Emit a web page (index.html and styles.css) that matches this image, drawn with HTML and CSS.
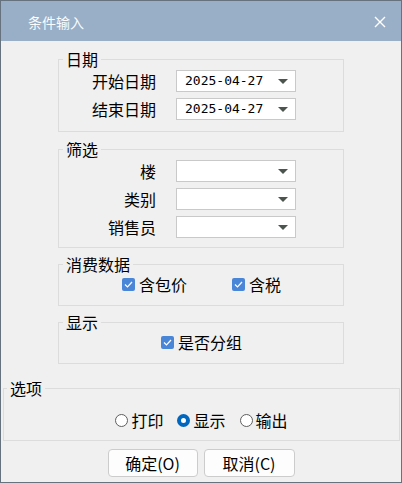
FILE: index.html
```html
<!DOCTYPE html>
<html lang="zh">
<head>
<meta charset="utf-8">
<title>条件输入</title>
<link rel="stylesheet" href="styles.css">
</head>
<body>
<div class="dialog">
  <div class="titlebar">
    <span class="title">条件输入</span>
    <svg class="close" width="12" height="12" viewBox="0 0 12 12"><path d="M1 1 L11 11 M11 1 L1 11" stroke="#ffffff" stroke-width="1.4" fill="none"/></svg>
  </div>
  <div class="content">
    <div class="group g-date">
      <span class="legend">日期</span>
      <div class="form-grid">
        <span class="label">开始日期</span>
        <div class="combo"><span class="value">2025-04-27</span><span class="arrow"></span></div>
        <span class="label">结束日期</span>
        <div class="combo"><span class="value">2025-04-27</span><span class="arrow"></span></div>
      </div>
    </div>
    <div class="group g-filter">
      <span class="legend">筛选</span>
      <div class="form-grid">
        <span class="label">楼</span>
        <div class="combo"><span class="value"></span><span class="arrow"></span></div>
        <span class="label">类别</span>
        <div class="combo"><span class="value"></span><span class="arrow"></span></div>
        <span class="label">销售员</span>
        <div class="combo"><span class="value"></span><span class="arrow"></span></div>
      </div>
    </div>
    <div class="group g-small">
      <span class="legend">消费数据</span>
      <div class="check-row wide">
        <label class="check"><span class="box"><svg width="9" height="7" viewBox="0 0 9 7"><path d="M1 3.5 L3.5 6 L8 1" stroke="#fff" stroke-width="1.2" fill="none"/></svg></span>含包价</label>
        <label class="check"><span class="box"><svg width="9" height="7" viewBox="0 0 9 7"><path d="M1 3.5 L3.5 6 L8 1" stroke="#fff" stroke-width="1.2" fill="none"/></svg></span>含税</label>
      </div>
    </div>
    <div class="group g-small">
      <span class="legend">显示</span>
      <div class="check-row">
        <label class="check"><span class="box"><svg width="9" height="7" viewBox="0 0 9 7"><path d="M1 3.5 L3.5 6 L8 1" stroke="#fff" stroke-width="1.2" fill="none"/></svg></span>是否分组</label>
      </div>
    </div>
    <div class="group g-options">
      <span class="legend">选项</span>
      <div class="radio-row">
        <label class="radio"><span class="circle"></span>打印</label>
        <label class="radio"><span class="circle on"></span>显示</label>
        <label class="radio"><span class="circle"></span>输出</label>
      </div>
    </div>
    <div class="buttons">
      <button class="btn">确定(O)</button>
      <button class="btn btn2">取消(C)</button>
    </div>
  </div>
</div>
</body>
</html>
```
FILE: styles.css
```css
* { box-sizing: border-box; }
html, body { margin: 0; padding: 0; }
body {
  width: 402px;
  height: 483px;
  font-family: "Noto Sans CJK SC", "Noto Sans", sans-serif;
  color: #000;
  background: #f0f0f0;
}
.dialog {
  width: 402px;
  height: 483px;
  border: 1px solid #66727e;
  background: #f0f0f0;
  display: flex;
  flex-direction: column;
}
.titlebar {
  height: 40px;
  background: #98afc7;
  display: flex;
  align-items: center;
  justify-content: space-between;
  padding: 0 15px 0 27px;
}
.title {
  color: #fafcfe;
  font-size: 14px;
  line-height: 16px;
  padding-top: 1px;
}
.close { margin-top: 1px; }
.content {
  display: flex;
  flex-direction: column;
  padding-top: 18px;
}
.group {
  border: 1px solid #dcdcdc;
  margin-left: 57px;
  width: 286px;
}
.legend {
  display: block;
  width: fit-content;
  margin: -10px 0 0 4px;
  padding: 0 3px;
  background: #f0f0f0;
  font-size: 16px;
  line-height: 18px;
}
.g-date { height: 73px; }
.g-filter { height: 99px; margin-top: 17px; }
.g-small { height: 42px; margin-top: 16px; }
.form-grid {
  display: grid;
  grid-template-columns: 97px 120px;
  column-gap: 20px;
  row-gap: 6px;
  margin-top: 2px;
}
.label {
  text-align: right;
  font-size: 16px;
  line-height: 22px;
}
.combo {
  height: 22px;
  background: #fff;
  border: 1px solid #c9c9c9;
  display: flex;
  align-items: center;
  justify-content: space-between;
  padding: 0 7px 0 8px;
}
.value {
  font-family: "DejaVu Sans Mono", monospace;
  font-size: 13px;
  line-height: 20px;
}
.arrow {
  width: 0;
  height: 0;
  border-left: 5px solid transparent;
  border-right: 5px solid transparent;
  border-top: 5px solid #4b554d;
}
.check-row {
  display: flex;
  justify-content: center;
  gap: 45px;
  margin-top: 1px;
  padding-left: 1px;
}
.check {
  display: flex;
  align-items: center;
  gap: 4px;
  font-size: 16px;
  line-height: 20px;
}
.box {
  width: 13px;
  height: 13px;
  border-radius: 2px;
  background: #4a86d8;
  display: flex;
  align-items: center;
  justify-content: center;
}
.g-options {
  margin-left: 2px;
  width: 397px;
  height: 53px;
  margin-top: 24px;
}
.g-options .legend { margin-left: 3px; padding: 0 3px; }
.radio-row {
  display: flex;
  justify-content: center;
  gap: 14px;
  margin-top: 13px;
}
.radio {
  display: flex;
  align-items: center;
  gap: 3px;
  font-size: 16px;
  line-height: 20px;
}
.circle {
  width: 13px;
  height: 13px;
  border-radius: 50%;
  border: 1px solid #5e5e5e;
  background: #fff;
}
.circle.on {
  border: 4px solid #0067c0;
  background: #fff;
}
.buttons {
  display: flex;
  justify-content: center;
  gap: 6px;
  margin-top: 8px;
}
.btn {
  width: 90px;
  height: 28px;
  background: #fdfdfd;
  border: 1px solid #cccccc;
  border-radius: 4px;
  font-family: "Noto Sans CJK SC", "Noto Sans", sans-serif;
  font-size: 16px;
  line-height: 20px;
  color: #000;
  padding: 0;
}
.btn2 { width: 91px; }
```
